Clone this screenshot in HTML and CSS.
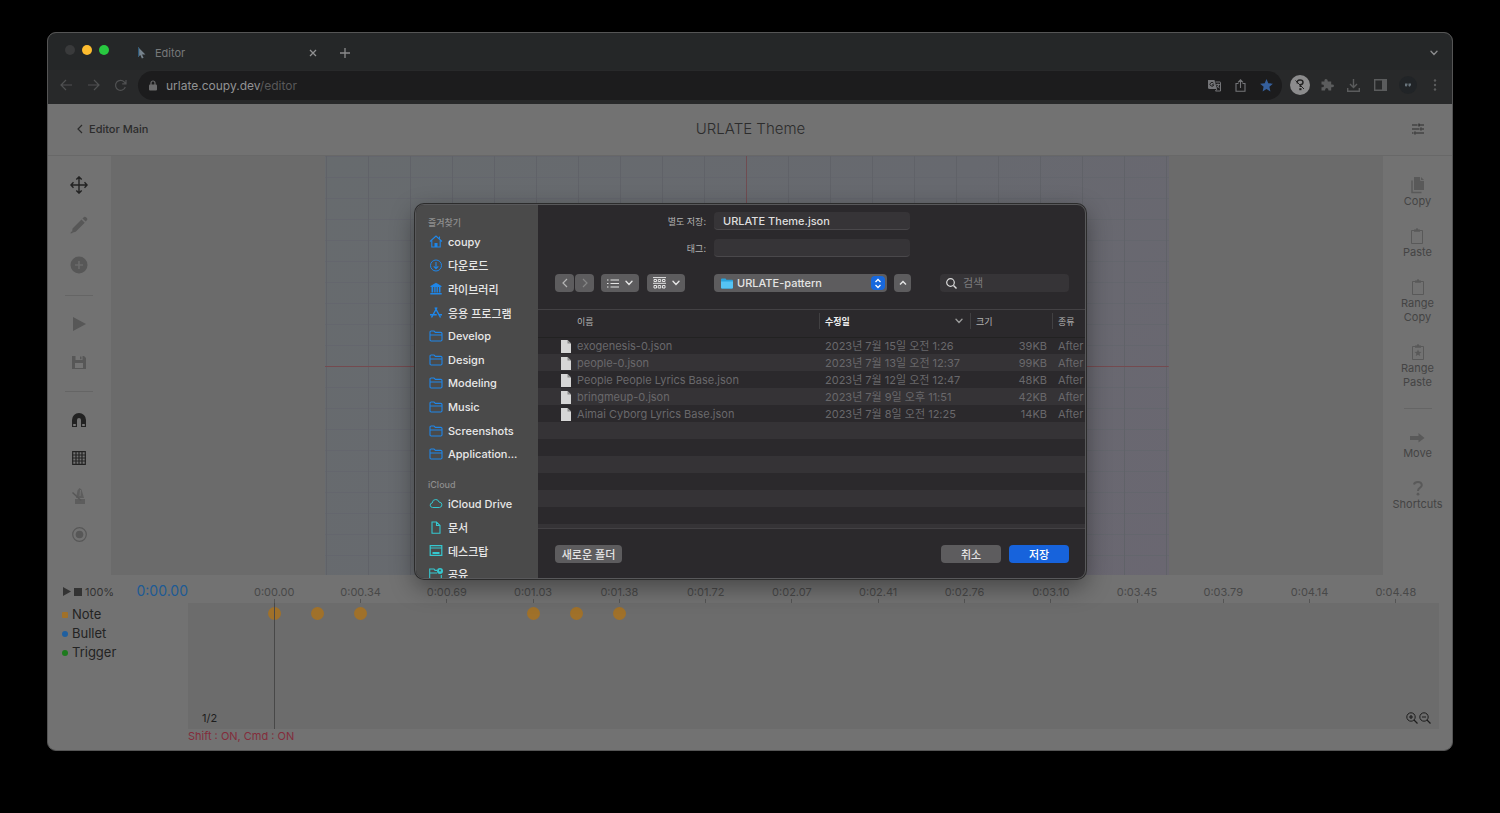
FILE: index.html
```html
<!DOCTYPE html>
<html lang="ko">
<head>
<meta charset="utf-8">
<title>Editor</title>
<link rel="stylesheet" href="styles.css">
</head>
<body>
<svg class="defs" aria-hidden="true">
  <symbol id="i-folder" viewBox="0 0 14 12"><path d="M1 10V2.2Q1 1 2.2 1H5l1.4 1.4h5.4Q13 2.400 13 3.600V9.800Q13 11 11.800 11H2.200Q1 11 1 9.800ZM1 5h12" fill="none" stroke="currentColor" stroke-width="1.100"/></symbol>
  <symbol id="i-file" viewBox="0 0 10 13"><path d="M0 0h6.500L10 3.500V13H0z" fill="#d6d6d6"/><path d="M6.500 0v3.500H10z" fill="#8c8c8c"/></symbol>
  <symbol id="i-down" viewBox="0 0 8 6"><path d="M1 1.200 4 4.400 7 1.200" fill="none" stroke="currentColor" stroke-width="1.400" stroke-linecap="round"/></symbol>
  <symbol id="i-clip" viewBox="0 0 18 18"><path d="M3.500 3.500h11v13h-11z" fill="none" stroke="currentColor"/><path d="M6 2.500h1.800q0-1.300 1.200-1.300t1.200 1.300H12v2.300H6z" fill="currentColor"/></symbol>
</svg>

<div class="window">
  <header class="tabstrip">
    <div class="lights"><i></i><i class="yellow"></i><i class="green"></i></div>
    <div class="tab">
      <svg width="9" height="12" viewBox="0 0 9 12"><path d="M1 0v10l2.300-2 1.600 3.600 1.700-.8L5 7.400h3.400z" fill="#76828c"/><path d="M1 0v10l1.200-1V1.200z" fill="#2c5878"/></svg>
      <span class="tab-title">Editor</span>
      <button class="bare" aria-label="Close tab"><svg width="8" height="8" viewBox="0 0 8 8"><path d="m1 1 6 6M7 1 1 7" stroke="currentColor" stroke-width="1.300"/></svg></button>
    </div>
    <button class="bare" aria-label="New tab"><svg width="12" height="12" viewBox="0 0 12 12"><path d="M6 1v10M1 6h10" stroke="currentColor" stroke-width="1.300"/></svg></button>
    <button class="bare push" aria-label="Tabs"><svg width="8" height="6"><use href="#i-down"/></svg></button>
  </header>
  <nav class="browserbar">
    <div class="navs">
      <button class="bare" aria-label="Back"><svg width="13" height="12" viewBox="0 0 13 12"><path d="M12 6H1.500M6 1 1 6l5 5" fill="none" stroke="currentColor" stroke-width="1.200"/></svg></button>
      <button class="bare" aria-label="Forward"><svg width="13" height="12" viewBox="0 0 13 12"><path d="M1 6h10.500M7 1l5 5-5 5" fill="none" stroke="currentColor" stroke-width="1.200"/></svg></button>
      <button class="bare" aria-label="Reload"><svg width="13" height="13" viewBox="0 0 13 13"><path d="M11.300 8A5 5 0 1 1 10.300 3l1.500 1.500M12 1v3.800H8.200" fill="none" stroke="currentColor" stroke-width="1.200"/></svg></button>
    </div>
    <div class="address">
      <svg width="8" height="11" viewBox="0 0 8 11"><rect y="4.500" width="8" height="6" rx="1" fill="#6c6c6d"/><path d="M2 5V3a2 2 0 0 1 4 0v2" fill="none" stroke="#6c6c6d" stroke-width="1.200"/></svg>
      <span class="url">urlate.coupy.dev<span class="path">/editor</span></span>
      <div class="address-tools">
        <button class="bare" aria-label="Translate"><svg width="13" height="13" viewBox="0 0 13 13"><path d="M0 1h6.500l2.500 9H1.500Q0 10 0 8.500z" fill="#747578"/><path d="M7.500 3H12q.5 0 .5.500V12H7.500L9 10M8.300 5.500h3.500M10 4.500v1M11 5.500q-.5 2-2 3M9 6.500q1 2 2.500 2.500" fill="none" stroke="#747578"/><path d="M5.500 4.200a1.900 1.900 0 1 0 .3 1.600H4" fill="none" stroke="#222"/></svg></button>
        <button class="bare" aria-label="Share"><svg width="11" height="13" viewBox="0 0 11 13"><path d="M3.500 4.500H1v7.800h9V4.500H7.500M5.500 9V1M3 3.300 5.500.800 8 3.300" fill="none" stroke="#747578" stroke-width="1.100"/></svg></button>
        <button class="bare" aria-label="Bookmark"><svg width="13" height="13" viewBox="0 0 13 13"><path d="m6.500 0 1.800 4.300 4.600.4-3.500 3.100 1 4.600-3.900-2.400-3.900 2.400 1-4.600L.1 4.700l4.600-.4z" fill="#355f9c"/></svg></button>
      </div>
    </div>
    <div class="extensions">
      <button class="bare" aria-label="Extension"><svg width="20" height="20" viewBox="0 0 20 20"><circle cx="10" cy="10" r="10" fill="#8c8c8d"/><path d="M7.500 8.500Q6.500 5 10 5q3 0 3 2.200T10.300 9.800V12" fill="none" stroke="#222" stroke-width="1.500"/><path d="m5.500 5.500 8.500 8.500" stroke="#222"/><path d="M9.300 13.200h2.200v2H9.300z" fill="#222"/></svg></button>
      <button class="bare" aria-label="Extensions"><svg width="14" height="14" viewBox="0 0 14 14"><path d="M1.500 3.500h3Q4 1 6 1t1.800 2.500h3.400v3q2.800-.5 2.800 1.300t-2.800 1.500v3.200H8.500Q8.500 10 6.700 10T5 12.500H1.500V9.300Q4 9.500 4 7.900T1.500 6.500z" fill="currentColor"/></svg></button>
      <button class="bare" aria-label="Downloads"><svg width="13" height="13" viewBox="0 0 13 13"><path d="M6.500 0v8M3 5l3.500 3.500L10 5M.700 9v3.300h11.600V9" fill="none" stroke="currentColor" stroke-width="1.400"/></svg></button>
      <button class="bare" aria-label="Side panel"><svg width="13" height="12" viewBox="0 0 13 12"><path d="M.700.700h11.600v10.600H.700z" fill="none" stroke="currentColor" stroke-width="1.400"/><path d="M8 1h4v10H8z" fill="currentColor"/></svg></button>
      <button class="bare" aria-label="Profile"><svg width="18" height="18" viewBox="0 0 18 18"><circle cx="9" cy="9" r="9" fill="#212427"/><path d="M6 7.500h2.500V9L7.300 10.800 6 10zM9.500 7.500H12V9l-1.200 1.800L9.500 10z" fill="#69747c"/></svg></button>
      <button class="bare" aria-label="Menu"><svg width="4" height="12" viewBox="0 0 4 12"><g fill="currentColor"><circle cx="2" cy="1.500" r="1.200"/><circle cx="2" cy="6" r="1.200"/><circle cx="2" cy="10.500" r="1.200"/></g></svg></button>
    </div>
  </nav>

  <header class="appbar">
    <a class="back" href="#"><svg width="6" height="10" viewBox="0 0 6 10"><path d="M5 1 1 5l4 4" fill="none" stroke="currentColor" stroke-width="1.200"/></svg>Editor Main</a>
    <h1 class="title">URLATE Theme</h1>
    <button class="bare settings" aria-label="Settings"><svg width="12" height="12" viewBox="0 0 12 12"><path d="M0 2h5.500M7.500 2H12M0 6h7.500M10 6h2M0 10h1.500M4 10h8M7 .500v3M9 4.500v3M3 8.500v3" stroke="currentColor" stroke-width="1.200"/></svg></button>
  </header>

  <main class="workspace">
    <div class="tools">
      <button class="bare on" aria-label="Move"><svg width="18" height="18" viewBox="0 0 18 18"><path d="M9 1v16M1 9h16M6.300 3.500 9 .900l2.700 2.600M6.300 14.500 9 17.100l2.700-2.600M3.500 6.300.900 9l2.600 2.700M14.500 6.300 17.100 9l-2.600 2.700" fill="none" stroke="currentColor" stroke-width="1.400"/></svg></button>
      <button class="bare" aria-label="Draw"><svg width="18" height="18" viewBox="0 0 18 18"><path d="m2.500 12.500 9-9 3.200 3.200-9 9-3.700 1zM12.500 2.500l1.500-1.500q1-.8 2 .2l1 1q.9 1-.1 2l-1.300 1.300zM.500 17.500l.6-2.300 1.700 1.700z" fill="currentColor"/></svg></button>
      <button class="bare" aria-label="Add"><svg width="18" height="18" viewBox="0 0 18 18"><circle cx="9" cy="9" r="8.500" fill="currentColor"/><path d="M9 5v8M5 9h8" stroke="#6b6b6b" stroke-width="1.600"/></svg></button>
      <hr>
      <div class="tool-group">
        <button class="bare" aria-label="Play"><svg width="14" height="14" viewBox="0 0 14 14"><path d="M1 0v14l13-7z" fill="currentColor"/></svg></button>
        <button class="bare" aria-label="Save"><svg width="14" height="14" viewBox="0 0 14 14"><path d="M0 1h12l2 2v11H0z" fill="currentColor"/><path d="M3.500 1v4h7V1M3 13V8h8v5z" fill="#747474"/><path d="M8 1.500h1.500v2.700H8z" fill="currentColor"/></svg></button>
      </div>
      <hr>
      <div class="tool-group">
        <button class="bare on" aria-label="Magnet"><svg width="14" height="14" viewBox="0 0 14 14"><path d="M0 14V7a7 7 0 0 1 14 0v7H9V7a2 2 0 0 0-4 0v7z" fill="currentColor"/><path d="M1.200 11h2.600v2H1.200zM10.200 11h2.600v2h-2.600z" fill="#777"/></svg></button>
        <button class="bare on" aria-label="Grid"><svg width="14" height="14" viewBox="0 0 14 14"><path d="M.700.700h12.600v12.600H.700zM0 4h14M0 7h14M0 10h14M4 0v14M7 0v14M10 0v14" fill="none" stroke="currentColor" stroke-width="1.200"/></svg></button>
        <button class="bare" aria-label="Metronome"><svg width="14" height="16" viewBox="0 0 14 16"><path d="M4 10 5.500 2.500 7.500 0l2 1.500L12 10zM3 11h10v5H3z" fill="currentColor" opacity=".8"/><path d="m.500 4.500 8.500 8" stroke="currentColor" stroke-width="1.500"/><path d="m8.500 2-.5 6" stroke="#727272"/></svg></button>
        <button class="bare" aria-label="Record"><svg width="15" height="15" viewBox="0 0 15 15"><circle cx="7.500" cy="7.500" r="6.800" fill="none" stroke="currentColor" stroke-width="1.200"/><circle cx="7.500" cy="7.500" r="3.800" fill="currentColor"/></svg></button>
      </div>
    </div>
    <div class="stage"><div class="canvas"></div></div>
    <div class="actions">
      <button class="action"><svg width="18" height="18" viewBox="0 0 18 18"><path d="M5 1h7l3 3v10H5z" fill="currentColor"/><path d="M11.500 1v3.500H15" stroke="#707070" fill="none"/><path d="M3 4.500v12h9.500" fill="none" stroke="currentColor" stroke-width="1.500"/></svg>Copy</button>
      <button class="action"><svg width="18" height="18"><use href="#i-clip"/></svg>Paste</button>
      <button class="action"><svg width="18" height="18"><use href="#i-clip"/></svg>Range<br>Copy</button>
      <button class="action"><svg width="18" height="18"><use href="#i-clip"/><path d="m9 6.500 1 2.300 2.500.2-1.900 1.600.6 2.400L9 11.700 6.800 13l.6-2.400L5.500 9 8 8.800z" fill="currentColor"/></svg>Range<br>Paste</button>
      <hr>
      <button class="action"><svg width="18" height="18" viewBox="0 0 18 18"><path d="M2 8h8.500V5l6 5-6 4.500V12H2z" fill="currentColor"/></svg>Move</button>
      <button class="action"><svg width="18" height="18" viewBox="0 0 18 18"><path d="M5 5.500Q5.500 3 9 3t3.800 3q0 1.700-2 2.800Q9 10 9 12" fill="none" stroke="currentColor" stroke-width="2"/><circle cx="9" cy="15.200" r="1.400" fill="currentColor"/></svg>Shortcuts</button>
    </div>
  </main>

  <section class="timeline">
    <div class="transport">
      <button class="bare" aria-label="Play timeline"><svg width="8" height="9" viewBox="0 0 8 9"><path d="M0 0v9l8-4.500z" fill="currentColor"/></svg></button>
      <button class="bare" aria-label="Stop"><svg width="8" height="8"><path d="M0 0h8v8H0z" fill="currentColor"/></svg></button>
      <span class="speed">100%</span>
      <span class="clock">0:00.00</span>
    </div>
    <div class="ruler">
      <span>0:00.00</span><span>0:00.34</span><span>0:00.69</span><span>0:01.03</span><span>0:01.38</span><span>0:01.72</span><span>0:02.07</span><span>0:02.41</span><span>0:02.76</span><span>0:03.10</span><span>0:03.45</span><span>0:03.79</span><span>0:04.14</span><span>0:04.48</span>
    </div>
    <ul class="layers"><li class="note">Note</li><li class="bullet">Bullet</li><li class="trigger">Trigger</li></ul>
    <div class="tracks">
      <div class="notes"><i class="n1"></i><i class="n2"></i><i class="n3"></i><i class="n4"></i><i class="n5"></i><i class="n6"></i><b class="playhead"></b></div>
      <div class="track-foot">
        <span>1/2</span>
        <span class="zoom">
          <button class="bare" aria-label="Zoom in"><svg width="12" height="12" viewBox="0 0 12 12"><path d="M5 3v4M3 5h4M8 8l3.500 3.500" stroke="currentColor" stroke-width="1.200"/><circle cx="5" cy="5" r="4.200" fill="none" stroke="currentColor"/></svg></button>
          <button class="bare" aria-label="Zoom out"><svg width="12" height="12" viewBox="0 0 12 12"><path d="M3 5h4M8 8l3.500 3.500" stroke="currentColor" stroke-width="1.200"/><circle cx="5" cy="5" r="4.200" fill="none" stroke="currentColor"/></svg></button>
        </span>
      </div>
    </div>
    <p class="status">Shift : ON, Cmd : ON</p>
  </section>

  <div class="dialog" role="dialog" aria-label="별도 저장">
    <aside class="sidebar">
      <h2>즐겨찾기</h2>
      <ul class="places">
        <li><svg width="13" height="13" viewBox="0 0 13 13"><path d="M.500 6.500 6.500 1l6 5.500M2.300 5.500V12h8.400V5.500M10 1.500v2" fill="none" stroke="currentColor" stroke-width="1.100"/><path d="M5 12V8h3v4z" fill="currentColor"/></svg>coupy</li>
        <li><svg width="13" height="13" viewBox="0 0 13 13"><path d="M6.500 3v6.500M4.200 7.300l2.300 2.300 2.300-2.300" fill="none" stroke="currentColor" stroke-width="1.100"/><circle cx="6.500" cy="6.500" r="5.500" fill="none" stroke="currentColor"/></svg>다운로드</li>
        <li><svg width="13" height="13" viewBox="0 0 13 13"><path d="M1 4 6.500.800 12 4v1H1zM2 5h1.700v5.500H2zM4.700 5h1.400v5.500H4.700zM7 5h1.400v5.500H7zM9.400 5H11v5.500H9.400zM.800 11h11.400v1.500H.800z" fill="currentColor"/></svg>라이브러리</li>
        <li><svg width="13" height="13" viewBox="0 0 13 13"><path d="M5.500 1.500 11 11.500M7.500 1.500 2 11.500M.500 8.800h6.700M9.500 8.800h3" stroke="currentColor" stroke-width="1.500"/></svg>응용 프로그램</li>
        <li><svg width="13" height="12"><use href="#i-folder"/></svg>Develop</li>
        <li><svg width="13" height="12"><use href="#i-folder"/></svg>Design</li>
        <li><svg width="13" height="12"><use href="#i-folder"/></svg>Modeling</li>
        <li><svg width="13" height="12"><use href="#i-folder"/></svg>Music</li>
        <li><svg width="13" height="12"><use href="#i-folder"/></svg>Screenshots</li>
        <li><svg width="13" height="12"><use href="#i-folder"/></svg>Application...</li>
      </ul>
      <h2>iCloud</h2>
      <ul class="places cloud">
        <li><svg width="13" height="11" viewBox="0 0 13 11"><path d="M3.200 9.500Q.700 9.300.700 7.200T2.700 5Q3 1.500 6.200 1.500q2.700 0 3.300 2.500 2.900.2 2.900 2.800 0 2.500-2.600 2.700z" fill="none" stroke="currentColor"/></svg>iCloud Drive</li>
        <li><svg width="13" height="13" viewBox="0 0 13 13"><path d="M2.500 1H7l3.500 3.500v7.800h-8zM7 1v3.500h3.500" fill="none" stroke="currentColor" stroke-width="1.100"/></svg>문서</li>
        <li><svg width="13" height="11" viewBox="0 0 13 11"><path d="M.700.700h11.600v9.600H.700zM.700 3h11.600" fill="none" stroke="currentColor" stroke-width="1.200"/><path d="M3 7h7v2H3z" fill="currentColor"/></svg>데스크탑</li>
        <li><svg width="14" height="12" viewBox="0 0 14 12"><path d="M8 2.400H6L5 1H.700v10h11.600V7M.700 5H8" fill="none" stroke="currentColor" stroke-width="1.100"/><circle cx="11" cy="3" r="3" fill="currentColor"/><circle cx="11" cy="2.500" r=".9" fill="#444"/></svg>공유</li>
      </ul>
    </aside>
    <div class="panel">
      <div class="fields">
        <label for="fname">별도 저장:</label><input id="fname" type="text" value="URLATE Theme.json">
        <label for="ftags">태그:</label><input id="ftags" type="text">
      </div>
      <div class="finder">
        <div class="pair">
          <button class="chip sq" aria-label="이전"><svg width="6" height="10" viewBox="0 0 6 10"><path d="M5 1 1 5l4 4" fill="none" stroke="#b5b5b5" stroke-width="1.200"/></svg></button>
          <button class="chip sq" aria-label="다음"><svg width="6" height="10" viewBox="0 0 6 10"><path d="m1 1 4 4-4 4" fill="none" stroke="#858585" stroke-width="1.200"/></svg></button>
        </div>
        <button class="chip view" aria-label="목록"><svg width="12" height="9" viewBox="0 0 12 9"><path d="M3.500 1H12M3.500 4.500H12M3.500 8H12M0 1h1.500M0 4.500h1.500M0 8h1.500" stroke="currentColor" stroke-width="1.200"/></svg><svg width="8" height="6"><use href="#i-down"/></svg></button>
        <button class="chip view" aria-label="그룹"><svg width="13" height="12" viewBox="0 0 13 12"><path d="M0 .600h13M0 6.300h13" stroke="currentColor"/><path d="M1 2.500h2.500v2H1zM5.200 2.500h2.500v2H5.200zM9.500 2.500H12v2H9.500zM1 8.500h2.500v2.500H1zM5.200 8.500h2.500v2.500H5.200zM9.500 8.500H12v2.500H9.500z" fill="none" stroke="currentColor"/></svg><svg width="8" height="6"><use href="#i-down"/></svg></button>
        <div class="chip where">
          <svg width="12" height="11" viewBox="0 0 12 11"><path d="M0 1.500Q0 .500 1 .500h3.500l1 1.200H11q1 0 1 1V9.500q0 1-1 1H1q-1 0-1-1z" fill="#2aa3dc"/><path d="M0 3.500h12v6q0 1-1 1H1q-1 0-1-1z" fill="#55c4f5"/></svg>
          <select aria-label="위치"><option>URLATE-pattern</option></select>
          <span class="step"><svg width="8" height="11" viewBox="0 0 8 11"><path d="m1.500 4L4 1.500 6.500 4M1.500 7 4 9.500 6.500 7" fill="none" stroke="#fff" stroke-width="1.300"/></svg></span>
        </div>
        <button class="chip up" aria-label="접기"><svg width="8" height="6" viewBox="0 0 8 6"><path d="M1 4.600 4 1.400l3 3.200" fill="none" stroke="currentColor" stroke-width="1.400"/></svg></button>
        <div class="search"><svg width="11" height="11" viewBox="0 0 11 11"><circle cx="4.500" cy="4.500" r="3.800" fill="none" stroke="#dcdcdc" stroke-width="1.200"/><path d="m7.500 7.500 3 3" stroke="#dcdcdc" stroke-width="1.400"/></svg><input type="search" placeholder="검색" aria-label="검색"></div>
      </div>
      <div class="listing">
        <table>
          <colgroup><col><col class="c-date"><col class="c-size"><col class="c-kind"></colgroup>
          <thead><tr><th>이름</th><th class="sorted"><span>수정일<svg width="8" height="6"><use href="#i-down"/></svg></span></th><th>크기</th><th>종류</th></tr></thead>
          <tbody>
            <tr><td><svg width="10" height="13"><use href="#i-file"/></svg>exogenesis-0.json</td><td>2023년 7월 15일 오전 1:26</td><td>39KB</td><td>After</td></tr>
            <tr><td><svg width="10" height="13"><use href="#i-file"/></svg>people-0.json</td><td>2023년 7월 13일 오전 12:37</td><td>99KB</td><td>After</td></tr>
            <tr><td><svg width="10" height="13"><use href="#i-file"/></svg>People People Lyrics Base.json</td><td>2023년 7월 12일 오전 12:47</td><td>48KB</td><td>After</td></tr>
            <tr><td><svg width="10" height="13"><use href="#i-file"/></svg>bringmeup-0.json</td><td>2023년 7월 9일 오후 11:51</td><td>42KB</td><td>After</td></tr>
            <tr><td><svg width="10" height="13"><use href="#i-file"/></svg>Aimai Cyborg Lyrics Base.json</td><td>2023년 7월 8일 오전 12:25</td><td>14KB</td><td>After</td></tr>
          </tbody>
        </table>
      </div>
      <footer class="buttons">
        <button class="chip new">새로운 폴더</button>
        <button class="chip wide">취소</button>
        <button class="chip wide save">저장</button>
      </footer>
    </div>
  </div>
</div>
</body>
</html>
```
FILE: styles.css
```css
* { box-sizing: border-box; }
body {
  margin: 0;
  min-height: 100vh;
  display: flex;
  padding: 32px 47px 62px;
  background: #000;
  font-family: Inter, "Noto Sans CJK KR", sans-serif;
  font-size: 11px;
}
.defs { position: absolute; width: 0; height: 0; }
svg { display: block; flex: none; }
ul, p, h1, h2 { margin: 0; padding: 0; list-style: none; font-weight: 400; }
button, input, select { font: inherit; color: inherit; margin: 0; padding: 0; border: 0; background: none; }
.bare { display: flex; align-items: center; justify-content: center; }

.window {
  position: relative;
  flex: 1;
  min-width: 0;
  display: flex;
  flex-direction: column;
  border: 1px solid #555;
  border-radius: 9px;
  background: #727272;
}

/* browser chrome */
.tabstrip {
  display: flex;
  align-items: center;
  height: 37px;
  padding: 3px 14px 0 17px;
  border-radius: 8px 8px 0 0;
  background: #252728;
  color: #8a8b8c;
}
.lights { display: flex; gap: 7px; margin-bottom: 6px; }
.lights i { width: 10px; height: 10px; border-radius: 50%; background: #393a3b; }
.lights .yellow { background: #fdbc2f; }
.lights .green { background: #28c840; }
.tab { display: flex; align-items: center; width: 192px; margin: 0 10px 0 28px; gap: 9px; color: #77797a; }
.tab-title { flex: 1; }
.tab .bare { color: #909192; margin-right: 12px; }
.push { margin-left: auto; }
.browserbar { display: flex; align-items: center; height: 34px; padding: 0 4px 4px 12px; background: #28292a; color: #5b5c5d; }
.navs { display: flex; gap: 14px; color: #505152; }
.address { flex: 1; display: flex; align-items: center; gap: 9px; height: 29px; margin-left: 11px; padding: 0 9px 0 11px; border-radius: 15px; background: #1c1c1d; }
.url { font-size: 12px; color: #929394; }
.path { color: #59595a; }
.address-tools { display: flex; gap: 14px; margin-left: auto; }
.extensions { display: flex; align-items: center; margin-left: 4px; }
.extensions .bare { width: 27px; }

/* editor header */
.appbar { display: grid; grid-template-columns: 1fr auto 1fr; align-items: center; height: 52px; padding: 0 28px 2px 29px; border-bottom: 1px solid #686868; color: #2c2c2c; }
.back { display: flex; align-items: center; gap: 6px; color: inherit; text-decoration: none; font-weight: 500; }
.title { font-size: 15px; font-weight: 300; }
.settings { justify-self: end; }

/* workspace */
.workspace { flex: 1; display: flex; min-height: 0; }
.tools { width: 63px; padding: 9px 1px 0 0; display: flex; flex-direction: column; align-items: center; color: #575757; }
.tools .bare { width: 40px; height: 40px; }
.tools .tool-group .bare { height: 38px; }
.tools .on { color: #222; }
.tools hr, .actions hr { width: 28px; height: 1px; margin: 0; border: 0; background: #656565; }
.tools hr { margin: 10px 0 9px; }
.stage { flex: 1; display: flex; justify-content: center; background: #6b6b6b; }
.canvas {
  width: 66.3%;
  background:
    linear-gradient(#6f4c51, #6f4c51) center / 1px 100% no-repeat,
    linear-gradient(transparent 50%, #744a4f 50%) center / 100% 2px no-repeat,
    repeating-linear-gradient(to right, transparent 0 1px, #606268 1px 2px, transparent 2px 42px),
    repeating-linear-gradient(to bottom, #64666d 0 1px, transparent 1px 21px),
    linear-gradient(120deg, #676b6e, #67696f 60%, #6a6771);
}
.actions { width: 69px; display: flex; flex-direction: column; align-items: center; gap: 19px; padding-top: 20px; color: #555; }
.action { display: flex; flex-direction: column; align-items: center; line-height: 14px; color: #444; }
.action svg { color: #595959; }

/* timeline */
.timeline { display: grid; grid-template-columns: 140px 1fr; grid-template-rows: 28px 126px 21px; padding-right: 13px; }
.transport { display: flex; align-items: center; gap: 3px; padding: 5px 0 0 15px; color: #333; }
.clock { margin: -2px 0 0 auto; font-size: 14px; color: #1d5a94; }
.ruler, .notes { display: grid; grid-template-columns: repeat(29, 1fr); }
.ruler { color: #484848; text-align: center; line-height: 34px; }
.ruler span { grid-column: span 2; background: linear-gradient(#555, #555) bottom / 1px 4px no-repeat; height: 28px; }
.ruler span:first-child { grid-column: 2 / span 2; }
.layers { padding: 2px 0 0 14px; font-size: 13px; line-height: 19px; color: #232323; }
.layers li { display: flex; align-items: center; gap: 4px; }
.layers li::before { content: ""; width: 6px; height: 6px; border-radius: 50%; }
.layers .note::before { background: #a0712a; border-radius: 1px; }
.layers .bullet::before { background: #1f5f9f; }
.layers .trigger::before { background: #1d7a1d; }
.tracks { display: flex; flex-direction: column; background: #6c6c6c; }
.notes { flex: 1; grid-template-rows: 1fr; margin-bottom: -22px; }
.notes i { grid-row: 1; justify-self: center; width: 13px; height: 13px; margin-top: 4px; border-radius: 50%; background: #a0712a; }
.n1 { grid-column: 2 / span 2; }
.n2 { grid-column: 3 / span 2; }
.n3 { grid-column: 4 / span 2; }
.n4 { grid-column: 8 / span 2; }
.n5 { grid-column: 9 / span 2; }
.n6 { grid-column: 10 / span 2; }
.playhead { grid-row: 1; grid-column: 2 / span 2; justify-self: center; width: 1px; background: #484848; }
.track-foot { display: flex; justify-content: space-between; align-items: center; height: 22px; padding: 0 8px 0 14px; color: #1d1d1d; }
.zoom { display: flex; gap: 1px; }
.status { grid-column: 2; line-height: 15px; color: #832c3b; }

/* save dialog */
.dialog {
  position: absolute;
  top: 171px;
  left: calc(50% - 335px);
  display: flex;
  width: 671px;
  height: 375px;
  border: 1px solid #58585a;
  border-radius: 9px;
  overflow: hidden;
  background: #2b292c;
  color: #dedede;
  box-shadow: 0 0 0 1px #2c2c2c, 0 8px 24px rgba(0, 0, 0, .4);
}
.sidebar { width: 122px; padding: 11px 0 0 12px; background: #4a4a4a; }
.sidebar h2 { font-size: 9px; font-weight: 500; line-height: 14px; color: #8e8e8e; }
.places { display: grid; grid-auto-rows: 1fr; height: 236px; margin-bottom: 12px; font-weight: 500; color: #e8e8e8; }
.places li { display: flex; align-items: center; gap: 5px; white-space: nowrap; padding-left: 1px; }
.places svg { width: 14px; color: #1f86e8; }
.cloud { height: 94px; }
.cloud svg { color: #35c7cf; }
.panel { flex: 1; min-width: 0; display: flex; flex-direction: column; }
.fields { display: grid; grid-template-columns: 168px 196px; gap: 9px 8px; align-items: center; padding-top: 7px; }
.fields label { text-align: right; font-size: 9px; line-height: 17px; color: #b4b4b4; }
.fields input { width: 100%; height: 18px; padding: 0 9px; border-radius: 4px; background: #363437; border-bottom: 1px solid #4a484b; font-weight: 500; }
.finder { display: flex; align-items: center; padding: 0 16px 0 17px; margin: 17px 0; }
.chip { display: flex; align-items: center; justify-content: center; height: 18px; border-radius: 4px; background: #5d5c5e; color: #e4e4e4; font-weight: 500; }
.pair { display: flex; gap: 1px; margin-right: 7px; }
.sq { width: 19px; }
.view { width: 38px; gap: 6px; margin-right: 8px; }
.view + .where { margin-left: 21px; }
.where { width: 173px; justify-content: flex-start; padding-left: 7px; }
.where select { flex: 1; min-width: 0; margin-left: 4px; appearance: none; }
.step { display: flex; align-items: center; justify-content: center; width: 14px; height: 14px; margin-right: 2px; border-radius: 4px; background: #1768dd; }
.up { width: 17px; margin-left: 7px; }
.search { display: flex; align-items: center; gap: 6px; width: 129px; height: 18px; margin-left: auto; padding-left: 6px; border-radius: 4px; background: #363437; }
.search input { min-width: 0; flex: 1; appearance: none; }
.search input::placeholder { color: #7d7c7e; }
.listing {
  flex: 1;
  min-height: 0;
  border-top: 1px solid #434144;
  border-bottom: 1px solid #434144;
  background: repeating-linear-gradient(#2b292c 0 17px, #353336 17px 34px) 0 27px no-repeat;
}
table { width: 100%; table-layout: fixed; border-collapse: collapse; color: #69686b; }
.c-date { width: 151px; }
.c-size { width: 82px; }
.c-kind { width: 33px; }
th, td { padding: 0 0 0 6px; text-align: left; white-space: nowrap; overflow: hidden; font-weight: 400; }
th { height: 22px; font-size: 9px; color: #b4b4b4; background: linear-gradient(#414042, #414042) left / 1px 16px no-repeat; }
th:first-child { padding-left: 39px; background: none; }
thead { border-bottom: 1px solid #222; }
thead::after { content: ""; display: block; height: 5px; }
.sorted { font-weight: 700; color: #eee; }
.sorted span { display: flex; align-items: center; justify-content: space-between; padding-right: 7px; }
.sorted svg { color: #999; }
td { height: 17px; line-height: 17px; }
td:first-child { padding-left: 23px; }
td:first-child svg { display: inline-block; vertical-align: middle; margin: -2px 6px 0 0; }
td:nth-child(3) { text-align: right; padding-right: 5px; }
.buttons { display: flex; align-items: center; gap: 8px; height: 49px; padding: 0 16px 0 17px; }
.new { width: 67px; margin-right: auto; }
.wide { width: 60px; }
.save { background: #1763dc; color: #fff; }
```
